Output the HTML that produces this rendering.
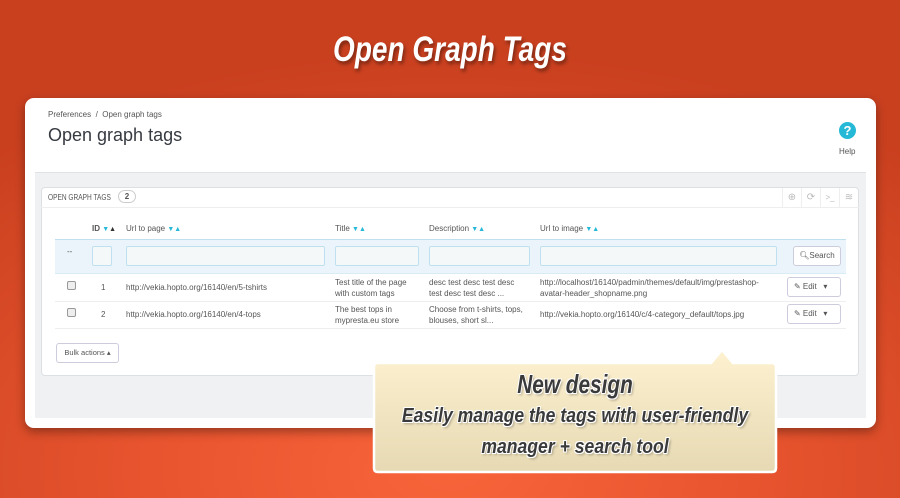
<!DOCTYPE html>
<html><head><meta charset="utf-8"><style>
*{box-sizing:border-box;margin:0;padding:0}
body{width:900px;height:498px;overflow:hidden;position:relative;font-family:"Liberation Sans",sans-serif;
background:radial-gradient(ellipse 700px 420px at 450px 470px,#f8643a 0%,#e9552f 40%,#c9401f 100%);}
.a{position:absolute}
.t{font-family:"Liberation Sans Narrow","Liberation Sans",sans-serif;font-weight:bold;font-style:italic;color:#fff;text-shadow:2px 3px 4px rgba(0,0,0,.4)}
.card{left:25px;top:98px;width:851px;height:330px;background:#fff;border-radius:9px;box-shadow:0 4px 10px rgba(0,0,0,.35)}
.gray{left:35px;top:172px;width:831px;height:246px;background:#eff1f2;border-top:1px solid #e0e3e5}
.panel{left:41px;top:187px;width:818px;height:189px;background:#fff;border:1px solid #dde0e2;border-radius:4px}
.s{font-size:8px;color:#555}
.inp{position:absolute;top:246px;height:20px;border:1px solid #bfe0ef;background:#f5f8f9;border-radius:2px}
.btn{position:absolute;background:#fff;border:1px solid #ccd;border-radius:3px;font-size:8px;color:#555}
.ar{color:#25b9d7;font-size:7px}
.cl{color:#3a3a3a;text-shadow:1px 1px 0 #fff,-1px -1px 0 #fff,1px -1px 0 #fff,-1px 1px 0 #fff,2px 2px 3px rgba(0,0,0,.3);text-align:center;white-space:nowrap}
</style></head><body>
<div class="a t" style="left:0;width:900px;top:30px;text-align:center;font-size:35px;transform:scaleX(0.8)">Open Graph Tags</div>
<div class="a card"></div>
<div class="a s" style="left:48px;top:110px">Preferences &nbsp;/&nbsp; Open graph tags</div>
<div class="a" style="left:48px;top:125px;font-size:18px;color:#363a41">Open graph tags</div>
<div class="a" style="left:839px;top:122px;width:17px;height:17px;border-radius:50%;background:#25b9d7;color:#fff;font-weight:bold;font-size:13px;text-align:center;line-height:17px">?</div>
<div class="a s" style="left:839px;top:147px">Help</div>
<div class="a gray"></div>
<div class="a panel"></div>
<div class="a" style="left:41px;top:207px;width:818px;border-top:1px solid #eee"></div>
<div class="a" style="left:48px;top:193px;font-size:8px;color:#555;transform:scaleX(0.82);transform-origin:left">OPEN GRAPH TAGS</div>
<div class="a" style="left:118px;top:190px;width:18px;height:13px;border:1px solid #ccc;border-radius:7px;font-size:8px;font-weight:bold;text-align:center;line-height:11px;color:#555">2</div>
<div class="a" style="left:782px;top:188px;width:76px;height:19px;color:#bbb;font-size:10px;display:flex;line-height:19px">
<span style="width:19px;text-align:center;border-left:1px solid #eee">⊕</span><span style="width:19px;text-align:center;border-left:1px solid #eee">⟳</span><span style="width:19px;text-align:center;border-left:1px solid #eee;font-size:8px">&gt;_</span><span style="width:19px;text-align:center;border-left:1px solid #eee">≋</span></div>
<div class="a s" style="left:92px;top:224px"><b>ID</b> <span class="ar">▼</span><span style="font-size:7px;color:#333">▲</span></div>
<div class="a s" style="left:126px;top:224px">Url to page <span class="ar">▼▲</span></div>
<div class="a s" style="left:335px;top:224px">Title <span class="ar">▼▲</span></div>
<div class="a s" style="left:429px;top:224px">Description <span class="ar">▼▲</span></div>
<div class="a s" style="left:540px;top:224px">Url to image <span class="ar">▼▲</span></div>
<div class="a" style="left:55px;top:239px;width:791px;height:35px;background:#eaf4fa;border-top:1px solid #bfe0ef;border-bottom:1px solid #d8ecf5"></div>
<div class="a s" style="left:67px;top:247px">--</div>
<div class="inp" style="left:92px;width:20px"></div>
<div class="inp" style="left:126px;width:199px"></div>
<div class="inp" style="left:335px;width:84px"></div>
<div class="inp" style="left:429px;width:101px"></div>
<div class="inp" style="left:540px;width:237px"></div>
<div class="btn" style="left:793px;top:246px;width:48px;height:20px;line-height:18px;text-align:center">&#x1F50D;&#xFE0E;Search</div>
<div class="a" style="left:55px;top:301px;width:791px;border-top:1px solid #eee"></div>
<div class="a" style="left:55px;top:328px;width:791px;border-top:1px solid #eee"></div>
<div class="a" style="left:67px;top:281px;width:9px;height:9px;border:1px solid #999;border-radius:2px;background:#eee"></div>
<div class="a" style="left:67px;top:308px;width:9px;height:9px;border:1px solid #999;border-radius:2px;background:#eee"></div>
<div class="a s" style="left:101px;top:283px">1</div>
<div class="a s" style="left:101px;top:310px">2</div>
<div class="a s" style="left:126px;top:283px">http://vekia.hopto.org/16140/en/5-tshirts</div>
<div class="a s" style="left:126px;top:310px">http://vekia.hopto.org/16140/en/4-tops</div>
<div class="a s" style="left:335px;top:277px;line-height:11px">Test title of the page<br>with custom tags</div>
<div class="a s" style="left:335px;top:304px;line-height:11px">The best tops in<br>mypresta.eu store</div>
<div class="a s" style="left:429px;top:277px;line-height:11px">desc test desc test desc<br>test desc test desc ...</div>
<div class="a s" style="left:429px;top:304px;line-height:11px">Choose from t-shirts, tops,<br>blouses, short sl...</div>
<div class="a s" style="left:540px;top:277px;line-height:11px">http://localhost/16140/padmin/themes/default/img/prestashop-<br>avatar-header_shopname.png</div>
<div class="a s" style="left:540px;top:310px">http://vekia.hopto.org/16140/c/4-category_default/tops.jpg</div>
<div class="btn" style="left:787px;top:277px;width:54px;height:20px;line-height:18px;padding-left:6px">✎ Edit &nbsp;&nbsp;▾</div>
<div class="btn" style="left:787px;top:304px;width:54px;height:20px;line-height:18px;padding-left:6px">✎ Edit &nbsp;&nbsp;▾</div>
<div class="btn" style="left:56px;top:343px;width:63px;height:20px;line-height:18px;text-align:center;font-size:7.5px">Bulk actions ▴</div>
<svg class="a" style="left:370px;top:345px" width="412" height="132">
<defs><linearGradient id="g" x1="0" y1="0" x2="0" y2="1"><stop offset="0" stop-color="#fdf1d0"/><stop offset="1" stop-color="#e6d9b3"/></linearGradient></defs>
<path d="M8 18 H341 L352 5 L363 18 H402 Q406 18 406 22 V123 Q406 127 402 127 H8 Q4 127 4 123 V22 Q4 18 8 18Z" fill="url(#g)" stroke="#fff" stroke-width="2.5"/>
</svg>
<div class="a t cl" style="left:373px;width:404px;top:367px;font-size:26px;line-height:34px;transform:scaleX(0.8)">New design</div>
<div class="a t cl" style="left:373px;width:404px;top:401px;font-size:20px;line-height:31px;transform:scaleX(0.88)">Easily manage the tags with user-friendly<br>manager + search tool</div>
</body></html>
